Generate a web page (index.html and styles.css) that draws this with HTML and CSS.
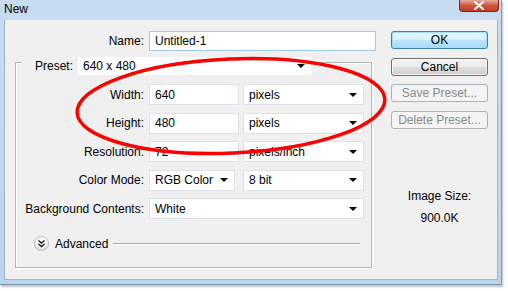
FILE: index.html
```html
<!DOCTYPE html>
<html lang="en">
    <head>
        <meta charset="UTF-8" />
        <title>New</title>
        <link rel="stylesheet" href="styles.css">
    </head>
    <body>
        <div class="window">
            <div class="titlebar">
                <span class="title">New</span>
                <span class="close">
                    <svg width="14" height="9" viewBox="0 0 14 9"><path d="M3 1 L11 8 M11 1 L3 8" stroke="#fff" stroke-width="2.2" stroke-linecap="round"/></svg>
                </span>
            </div>
            <div class="client">
                <div class="main">
                    <div class="row name-row">
                        <label class="lbl">Name:</label>
                        <div class="field name-field">Untitled-1</div>
                    </div>
                    <div class="group">
                        <div class="group-head">
                            <label class="preset-lbl">Preset:</label>
                            <div class="select preset">640 x 480<i class="arrow"></i></div>
                        </div>
                        <div class="rows">
                            <div class="row">
                                <label class="lbl">Width:</label>
                                <div class="field num">640</div>
                                <div class="select unit">pixels<i class="arrow"></i></div>
                            </div>
                            <div class="row">
                                <label class="lbl">Height:</label>
                                <div class="field num">480</div>
                                <div class="select unit">pixels<i class="arrow"></i></div>
                            </div>
                            <div class="row">
                                <label class="lbl">Resolution:</label>
                                <div class="field num">72</div>
                                <div class="select unit">pixels/inch<i class="arrow"></i></div>
                            </div>
                            <div class="row">
                                <label class="lbl">Color Mode:</label>
                                <div class="select mode">RGB Color<i class="arrow"></i></div>
                                <div class="select unit">8 bit<i class="arrow"></i></div>
                            </div>
                            <div class="row">
                                <label class="lbl">Background Contents:</label>
                                <div class="select wide">White<i class="arrow"></i></div>
                            </div>
                        </div>
                        <div class="advanced">
                            <span class="adv-btn">
                                <svg width="9" height="9" viewBox="0 0 9 9"><path d="M1.5 1.5 L4.5 4 L7.5 1.5 M1.5 5 L4.5 7.5 L7.5 5" fill="none" stroke="#222" stroke-width="1.4"/></svg>
                            </span>
                            <span class="adv-text">Advanced</span>
                            <span class="adv-line"></span>
                        </div>
                    </div>
                </div>
                <div class="side">
                    <button class="btn default">OK</button>
                    <button class="btn">Cancel</button>
                    <button class="btn" disabled>Save Preset...</button>
                    <button class="btn" disabled>Delete Preset...</button>
                    <div class="size-info">
                        <div>Image Size:</div>
                        <div class="size-val">900.0K</div>
                    </div>
                </div>
            </div>
        </div>
        <svg class="mark" width="508" height="291" viewBox="0 0 508 291">
            <ellipse cx="231" cy="106" rx="154" ry="47" transform="rotate(-2.5 231 106)" fill="none" stroke="#f00" stroke-width="3.5"/>
        </svg>
    </body>
</html>
```

FILE: styles.css
```css
* {
    box-sizing: border-box;
}
body {
    margin: 0;
    width: 508px;
    height: 291px;
    background-color: #ffffff;
    font-family: "Liberation Sans", Arial, sans-serif;
    font-size: 12px;
    color: #000;
    position: relative;
    overflow: hidden;
}
.window {
    width: 502px;
    height: 285px;
    display: flex;
    flex-direction: column;
    background: linear-gradient(#c8dcf1, #bcd3ec);
    border-right: 1px solid #7d97b5;
    border-bottom: 1px solid #7d97b5;
    box-shadow: 1px 2px 2px rgba(0, 0, 0, 0.25);
}
.titlebar {
    height: 20px;
    display: flex;
    align-items: flex-start;
    padding-left: 4px;
}
.title {
    line-height: 18px;
}
.close {
    margin-left: auto;
    margin-right: 2px;
    width: 40px;
    height: 12px;
    display: flex;
    align-items: center;
    justify-content: center;
    background: linear-gradient(#e9a998, #d0573f 50%, #c23b22);
    border: 1px solid #7e2a1c;
    border-top: none;
    border-radius: 0 0 4px 4px;
}
.client {
    flex: 1;
    margin: 0 3px 4px 4px;
    padding: 11px 0 0 10px;
    background-color: #f0f0f0;
    border: 1px solid #9fb5cd;
    border-top: none;
    display: flex;
}
.main {
    width: 361px;
}
.row {
    display: flex;
    align-items: center;
    height: 21px;
}
.lbl {
    width: 128px;
    margin-right: 5px;
    text-align: right;
    white-space: nowrap;
}
.name-row {
    height: 20px;
}
.name-row .lbl {
    width: 129px;
}
.field, .select {
    height: 100%;
    display: flex;
    align-items: center;
    padding: 0 6px 0 5px;
    background-color: #ffffff;
    border: 1px solid #dde2e8;
    white-space: nowrap;
}
.name-field {
    width: 227px;
    border-color: #9fcbec;
}
.select {
    justify-content: space-between;
}
.arrow {
    width: 0;
    height: 0;
    border-left: 4px solid transparent;
    border-right: 4px solid transparent;
    border-top: 4px solid #000;
}
.num {
    width: 90px;
}
.unit {
    width: 121px;
    margin-left: 4px;
}
.mode {
    width: 86px;
    margin-right: 4px;
}
.wide {
    width: 215px;
}
.group {
    width: 357px;
    margin-top: 11px;
    padding-bottom: 16px;
    border: 1px solid #b4b4b4;
    box-shadow: inset 1px 1px 0 #fff, 1px 1px 0 #fff;
}
.group-head {
    display: flex;
    align-items: center;
    width: max-content;
    height: 20px;
    margin: -7px 0 0 6px;
    padding-right: 6px;
    background-color: #f0f0f0;
}
.preset-lbl {
    width: 51px;
    margin-right: 4px;
    text-align: right;
}
.preset {
    width: 235px;
    border-color: #f0f0f0;
}
.rows {
    margin-top: 8px;
    display: flex;
    flex-direction: column;
    gap: 7.5px;
}
.advanced {
    margin-top: 17px;
    height: 15px;
    display: flex;
    align-items: center;
    padding-left: 18px;
}
.adv-btn {
    width: 15px;
    height: 15px;
    border-radius: 50%;
    border: 1px solid #b9b9b9;
    background: linear-gradient(#ffffff, #e2e2e2);
    display: flex;
    align-items: center;
    justify-content: center;
}
.adv-text {
    margin-left: 6px;
}
.adv-line {
    width: 247px;
    margin-left: 5px;
    height: 2px;
    border-top: 1px solid #a8a8a8;
    border-bottom: 1px solid #ffffff;
}
.side {
    margin-left: 15px;
    width: 97px;
    display: flex;
    flex-direction: column;
    gap: 8.5px;
}
.btn {
    height: 18px;
    padding: 0;
    font-family: inherit;
    font-size: 12px;
    color: #000;
    border: 1px solid #707070;
    border-radius: 3px;
    background: linear-gradient(#f2f2f2 0%, #ebebeb 50%, #dddddd 51%, #cfcfcf 100%);
    box-shadow: inset 0 0 0 1px rgba(255, 255, 255, 0.7);
}
.btn.default {
    border-color: #3c7fb1;
    background: linear-gradient(#eaf6fd 0%, #d9f0fc 50%, #bee6fd 51%, #a7d9f5 100%);
    box-shadow: inset 0 0 0 1px #9fe1fb;
}
.btn:disabled {
    color: #8a8a8a;
    border-color: #adb2b5;
    background: #f4f4f4;
    box-shadow: none;
}
.size-info {
    margin-top: 52px;
    text-align: center;
    line-height: 15px;
}
.size-val {
    margin-top: 7px;
}
.mark {
    position: absolute;
    top: 0;
    left: 0;
    pointer-events: none;
}
```
